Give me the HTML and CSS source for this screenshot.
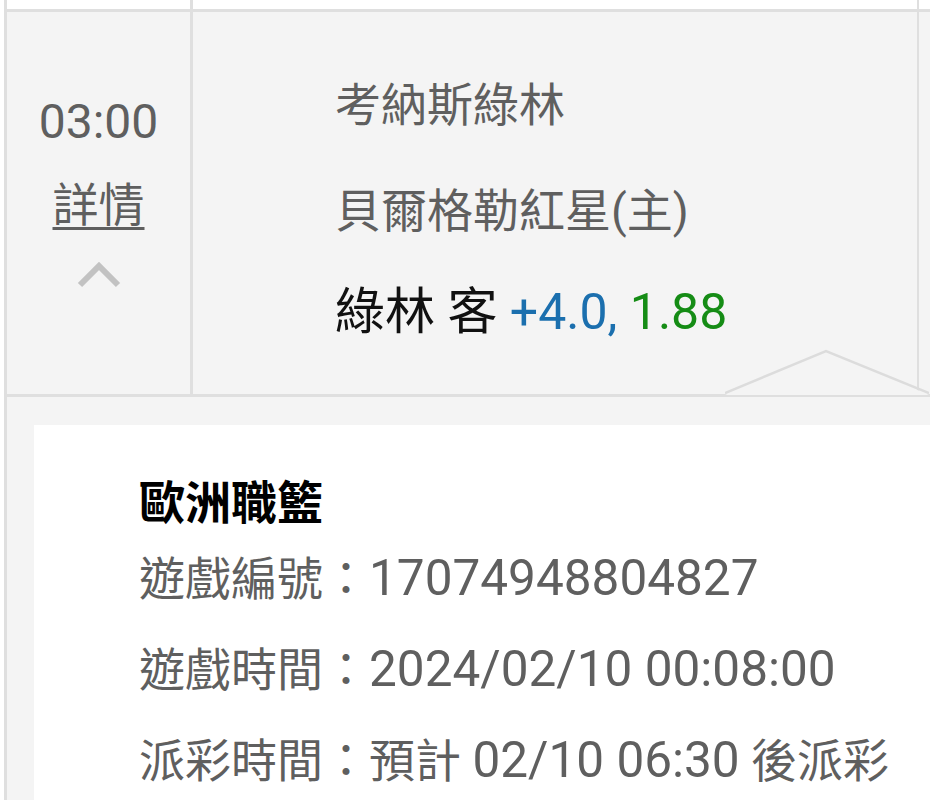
FILE: index.html
```html
<!DOCTYPE html>
<html lang="zh-Hant">
  <head>
    <meta charset="UTF-8" />
    <meta name="viewport" content="width=device-width, initial-scale=1.0" />
    <title>賽事詳情</title>
    <link rel="stylesheet" href="styles.css">
  </head>
  <body>
    <div class="list">
      <div class="row prev">
        <div class="colTime"></div>
        <div class="colTeams"></div>
        <div class="colMore"></div>
      </div>

      <div class="row match">
        <div class="colTime">
          <div class="time">03:00</div>
          <a class="detailLink" href="#">詳情</a>
          <svg class="chevron" viewBox="0 0 44 26" width="44" height="26">
            <polyline points="3,23 22,4 41,23" />
          </svg>
        </div>
        <div class="colTeams">
          <div class="team">考納斯綠林</div>
          <div class="team">貝爾格勒紅星(主)</div>
          <div class="bet">
            綠林 客 <span class="handicap">+4.0,</span> <span class="odds">1.88</span>
          </div>
        </div>
        <div class="colMore"></div>
      </div>

      <div class="detail">
        <svg class="caret" viewBox="0 0 204 46" width="204" height="46">
          <polygon points="0,46 101,2 204,46" />
          <polyline points="0,44 101,2 204,44" />
        </svg>
        <div class="card">
          <h2>歐洲職籃</h2>
          <p>遊戲編號：<span class="num">17074948804827</span></p>
          <p>遊戲時間：<span class="num">2024/02/10 00:08:00</span></p>
          <p>派彩時間：預計 <span class="num">02/10 06:30</span> 後派彩</p>
        </div>
      </div>
    </div>
  </body>
</html>
```

FILE: styles.css
```css
:root {
  --bg: #f4f4f4;
  --line: #dfdfdf;
  --text: #5f5f5f;
  --blue: #1b6fae;
  --green: #158c15;
}

* {
  margin: 0;
  padding: 0;
  box-sizing: border-box;
}

body {
  background: #ffffff;
  font-family: Roboto, "Noto Sans CJK TC", sans-serif;
  color: var(--text);
  overflow: hidden;
}

.list {
  margin-left: 4px;
  border-left: 3px solid var(--line);
  min-height: 100vh;
}

.row {
  display: flex;
}

.colTime {
  width: 186px;
  flex-shrink: 0;
  border-right: 3px solid var(--line);
}

.colTeams {
  flex: 1;
  border-right: 2px solid var(--line);
}

.colMore {
  width: 11px;
  flex-shrink: 0;
}

.prev {
  height: 9px;
  background: #ffffff;
}

.match {
  height: 388px;
  background: var(--bg);
  border-top: 3px solid var(--line);
  border-bottom: 3px solid var(--line);
}

.match .colTime {
  display: flex;
  flex-direction: column;
  align-items: center;
  padding-top: 82px;
}

.time {
  font-size: 48px;
  line-height: 56px;
}

.detailLink {
  margin-top: 28px;
  font-size: 46px;
  line-height: 54px;
  color: var(--text);
  text-decoration: underline;
  text-decoration-thickness: 3px;
  text-underline-offset: 6px;
}

.chevron {
  margin-top: 30px;
}

.chevron polyline {
  fill: none;
  stroke: #c2c2c2;
  stroke-width: 6;
}

.colTeams {
  padding: 40px 0 0 142px;
}

.team {
  font-size: 46px;
  line-height: 106px;
}

.bet {
  margin-top: -4px;
  font-size: 50px;
  line-height: 104px;
  color: #111111;
}

.handicap {
  color: var(--blue);
}

.odds {
  color: var(--green);
}

.detail {
  position: relative;
  background: var(--bg);
  padding: 28px 0 0 27px;
  min-height: 420px;
}

.caret {
  position: absolute;
  left: 718px;
  top: -48px;
}

.caret polygon {
  fill: var(--bg);
}

.caret polyline {
  fill: none;
  stroke: #dcdcdc;
  stroke-width: 2.5;
}

.card {
  background: #ffffff;
  padding: 46px 0 40px 105px;
  min-height: 400px;
}

.card h2 {
  font-size: 46px;
  font-weight: 700;
  line-height: 64px;
  color: #000000;
  margin-bottom: -2px;
}

.card p {
  font-size: 46px;
  line-height: 90px;
}

.num {
  font-size: 49.5px;
}
```
